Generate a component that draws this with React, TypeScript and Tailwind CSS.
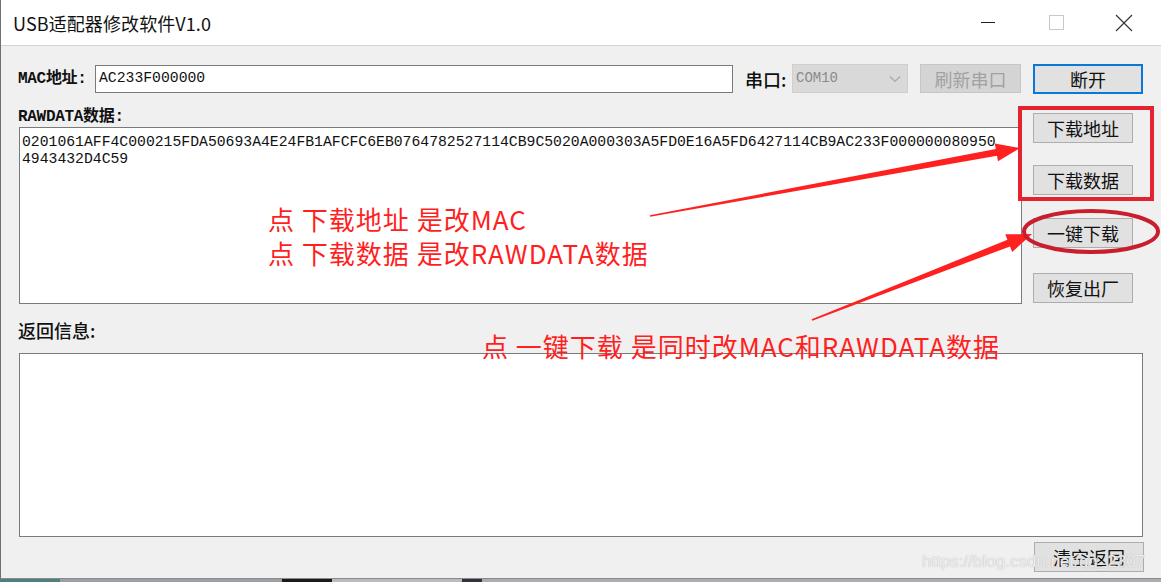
import React from "react";

function arrowPoints(
  x1: number, y1: number, x2: number, y2: number,
  tailW: number, shaftW: number, headW: number, headL: number
): string {
  const dx = x2 - x1, dy = y2 - y1;
  const L = Math.hypot(dx, dy);
  const ux = dx / L, uy = dy / L;
  const nx = -uy, ny = ux;
  const bx = x2 - ux * headL, by = y2 - uy * headL;
  const p = (x: number, y: number) => `${x.toFixed(1)},${y.toFixed(1)}`;
  return [
    p(x1 + nx * tailW / 2, y1 + ny * tailW / 2),
    p(bx + nx * shaftW / 2, by + ny * shaftW / 2),
    p(bx + nx * headW / 2, by + ny * headW / 2),
    p(x2, y2),
    p(bx - nx * headW / 2, by - ny * headW / 2),
    p(bx - nx * shaftW / 2, by - ny * shaftW / 2),
    p(x1 - nx * tailW / 2, y1 - ny * tailW / 2),
  ].join(" ");
}

function Btn({ children, className }: { children: React.ReactNode; className: string }) {
  return (
    <div
      className={
        "flex items-center justify-center bg-[#e1e1e1] border border-[#adadad] text-[18px] leading-none text-[#111] font-['Noto_Sans_CJK_SC',sans-serif] " +
        className
      }
    >
      {children}
    </div>
  );
}

export default function App() {
  const raw1 =
    "0201061AFF4C000215FDA50693A4E24FB1AFCFC6EB0764782527114CB9C5020A000303A5FD0E16A5FD6427114CB9AC233F000000080950";
  const raw2 = "4943432D4C59";
  return (
    <div className="relative w-[1161px] h-[582px] bg-[#f0f0f0] overflow-hidden font-['Noto_Sans_CJK_SC',sans-serif]">
      <div className="border-l border-[#707070] h-[579px] border-b border-b-[#8a8a8a]">
        {/* Title bar */}
        <div className="h-[46px] bg-white border-b border-[#d4d4d4] flex items-center pl-[12px]">
          <span className="text-[18px] text-[#111] leading-none tracking-[0.1px]">USB适配器修改软件V1.0</span>
          <div className="ml-auto flex items-center h-full">
            <div className="w-[68px] h-full flex items-center justify-center">
              <div className="w-[14px] h-[1px] bg-[#222]" />
            </div>
            <div className="w-[68px] h-full flex items-center justify-center">
              <div className="w-[15px] h-[15px] border border-[#c8c8c8]" />
            </div>
            <div className="w-[68px] h-full flex items-center justify-center mr-[3px]">
              <svg width="18" height="18" viewBox="0 0 18 18">
                <path d="M1 1 L17 17 M17 1 L1 17" stroke="#333" strokeWidth="1.1" fill="none" />
              </svg>
            </div>
          </div>
        </div>

        {/* Content */}
        <div className="h-[532px] pl-[17px] pr-[17px] pt-[17px]">
          {/* Row 1 */}
          <div className="flex items-center h-[31px]">
            <div className="w-[77px] text-[16px] leading-none text-[#111] font-['Liberation_Mono','Noto_Sans_CJK_SC',monospace] font-bold tracking-[-0.3px]">
              MAC地址:
            </div>
            <div className="w-[638px] h-[28px] bg-white border border-[#7a7a7a] flex items-center pl-[3px] text-[14.75px] text-[#111] font-['Liberation_Mono',monospace]">
              AC233F000000
            </div>
            <div className="ml-[12px] w-[47px] text-[18px] leading-none text-[#111] font-medium">串口:</div>
            <div className="w-[116px] h-[29px] bg-[#d9d9d9] border border-[#cfcfcf] flex items-center pl-[3px] pr-[6px]">
              <span className="text-[14px] text-[#8a8a8a] font-['Liberation_Mono',monospace]">COM10</span>
              <svg className="ml-auto" width="12" height="8" viewBox="0 0 12 8">
                <path d="M1 1.5 L6 6.5 L11 1.5" stroke="#a8a8a8" strokeWidth="1.2" fill="none" />
              </svg>
            </div>
            <div className="ml-[12px] w-[101px] h-[29px] bg-[#d4d4d4] border border-[#c6c6c6] flex items-center justify-center text-[18px] leading-none text-[#a2a2a2]">
              刷新串口
            </div>
            <div className="ml-[12px] w-[110px] h-[30px] bg-[#e1e1e1] border-2 border-[#0a78d7] flex items-center justify-center text-[18px] leading-none text-[#111]">
              断开
            </div>
          </div>

          {/* Row 2 */}
          <div className="flex items-start mt-[12px]">
            <div className="w-[1004px]">
              <div className="h-[21px] flex items-center text-[16px] leading-none text-[#111] font-['Liberation_Mono','Noto_Sans_CJK_SC',monospace] font-bold tracking-[-0.3px]">
                RAWDATA数据:
              </div>
              <div className="ml-[1px] w-[1003px] h-[177px] bg-white border border-[#7a7a7a] pl-[2px] pt-[6px] text-[14.75px] leading-[17px] text-[#111] font-['Liberation_Mono',monospace] whitespace-pre">
                <div>{raw1}</div>
                <div>{raw2}</div>
              </div>
            </div>
            <div className="ml-[11px] pt-[7px] flex flex-col">
              <Btn className="w-[100px] h-[30px]">下载地址</Btn>
              <Btn className="w-[100px] h-[30px] mt-[22px]">下载数据</Btn>
              <Btn className="w-[100px] h-[30px] mt-[23px]">一键下载</Btn>
              <Btn className="w-[100px] h-[30px] mt-[25px]">恢复出厂</Btn>
            </div>
          </div>

          {/* Return info */}
          <div className="mt-[14px] h-[24px] mb-[11px] flex items-center text-[18px] leading-none text-[#111] font-medium">
            返回信息:
          </div>
          <div className="ml-[1px] w-[1124px] h-[184px] bg-white border border-[#7a7a7a]" />
          <div className="flex justify-end mt-[5px]">
            <Btn className="w-[110px] h-[30px]">清空返回</Btn>
          </div>
        </div>
      </div>

      {/* Taskbar strip */}
      <div className="flex h-[3px]">
        <div className="w-[60px] bg-[#4f7f80]" />
        <div className="w-[222px] bg-[#9aa0a6]" />
        <div className="w-[50px] bg-[#1a1a1a]" />
        <div className="w-[130px] bg-[#b8bcc0]" />
        <div className="w-[20px] bg-[#30343a]" />
        <div className="flex-1 bg-[#a9adb2]" />
      </div>

      {/* Watermark */}
      <div className="absolute left-[922px] top-[550px] text-[17px] leading-[24px] text-white/80 font-['Liberation_Sans',sans-serif] [text-shadow:0_0_1px_#9a9a9a] pointer-events-none">
        https://blog.csdn.net/qq_2307
      </div>

      {/* Annotations */}
      <div className="absolute left-[268px] top-[204px] text-[26px] leading-[30px] tracking-[1px] text-[#ff1f1f] whitespace-pre pointer-events-none">
        点 下载地址 是改MAC
      </div>
      <div className="absolute left-[268px] top-[238px] text-[26px] leading-[30px] tracking-[1px] text-[#ff1f1f] whitespace-pre pointer-events-none">
        点 下载数据 是改RAWDATA数据
      </div>
      <div className="absolute left-[482px] top-[331px] text-[26px] leading-[30px] tracking-[1px] text-[#ff1f1f] whitespace-pre pointer-events-none">
        点 一键下载 是同时改MAC和RAWDATA数据
      </div>
      <div className="absolute left-[1018px] top-[106px] w-[136px] h-[95px] border-4 border-[#e3232f] pointer-events-none" />
      <svg className="absolute left-0 top-0 pointer-events-none" width="1161" height="582">
        <polygon points={arrowPoints(650, 216, 1020, 148, 1.5, 7, 18, 24)} fill="#ff2020" />
        <polygon points={arrowPoints(812, 320, 1032, 234, 1.5, 7, 19, 25)} fill="#ff2020" />
        <ellipse cx="1091" cy="231.5" rx="67" ry="20.5" fill="none" stroke="#c81e2e" strokeWidth="4" />
      </svg>
    </div>
  );
}
